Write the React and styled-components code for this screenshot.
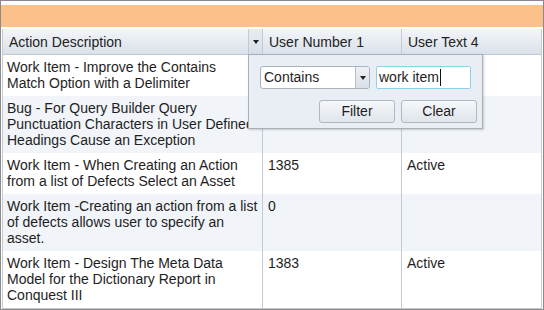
import React from "react";
import styled, { createGlobalStyle } from "styled-components";

const Global = createGlobalStyle`
  html, body { margin: 0; padding: 0; background: #fff; }
  body { font-family: "Liberation Sans", Arial, sans-serif; font-size: 14px; }
  * { box-sizing: border-box; }
`;

const Frame = styled.div`
  width: 544px;
  height: 310px;
  border: 1px solid #8a8a8a;
  padding-top: 4px;
  background: #fff;
  display: flex;
  flex-direction: column;
`;

const Toolbar = styled.div`
  height: 22px;
  background: #fcc08b;
  flex: none;
`;

const Grid = styled.div`
  position: relative;
  margin: 2px 1px 0;
  border: 1px solid #c3cad3;
  border-top: none;
  flex: 1;
  display: flex;
  flex-direction: column;
  overflow: hidden;
`;

const cols = "260px 139px 139px";

const HeaderRow = styled.div`
  display: grid;
  grid-template-columns: ${cols};
  height: 26px;
  border-bottom: 1px solid #c3cad3;
  background: linear-gradient(#f3f6f9, #dae1ea);
`;

const HeaderCell = styled.div`
  display: flex;
  align-items: center;
  padding-left: 6px;
  color: #222;
  font-size: 14px;
  line-height: 16px;
  border-right: ${(p) => (p.$last ? "none" : "1px solid #c3cad3")};
  white-space: nowrap;
`;

const HeaderTitle = styled.span`
  flex: 1;
`;

const MenuButton = styled.span`
  width: 14px;
  align-self: stretch;
  border-left: 1px solid #c3cad3;
  display: flex;
  align-items: center;
  justify-content: center;
  background: linear-gradient(#e9edf2, #d6dee7);
`;

const Caret = styled.span`
  width: 0;
  height: 0;
  border-left: 3.5px solid transparent;
  border-right: 3.5px solid transparent;
  border-top: 4px solid #222;
`;

const Row = styled.div`
  display: grid;
  grid-template-columns: ${cols};
  background: ${(p) => (p.$alt ? "#f1f4f8" : "#fff")};
`;

const Cell = styled.div`
  padding: 4px 3px 5px ${(p) => (p.$first ? "4px" : "5px")};
  line-height: 16px;
  color: #1e1e1e;
  border-right: ${(p) => (p.$last ? "none" : "1px solid #c3cad3")};
  overflow: hidden;
`;

const Line = styled.span`
  display: block;
  white-space: nowrap;
`;

const Popup = styled.div`
  position: absolute;
  left: 245px;
  top: 25px;
  width: 235px;
  height: 75px;
  border: 1px solid #a8b0ba;
  background: #e9eef4;
  box-shadow: 1px 1px 2px rgba(0, 0, 0, 0.18);
  padding: 11px 5px 5px 11px;
  display: flex;
  flex-direction: column;
`;

const FieldRow = styled.div`
  display: flex;
  gap: 6px;
`;

const Select = styled.div`
  width: 110px;
  height: 23px;
  border: 1px solid #a9b3bf;
  border-radius: 3px;
  background: #fff;
  display: flex;
  overflow: hidden;
`;

const SelectText = styled.span`
  flex: 1;
  padding-left: 3px;
  line-height: 21px;
  color: #1e1e1e;
`;

const SelectArrow = styled.span`
  width: 14px;
  border-left: 1px solid #b7c0ca;
  background: linear-gradient(#eef1f5, #d9e0e8);
  display: flex;
  align-items: center;
  justify-content: center;
`;

const Input = styled.div`
  width: 95px;
  height: 23px;
  border: 1px solid #8dd2ea;
  border-radius: 2px;
  background: #fff;
  padding-left: 2px;
  line-height: 21px;
  color: #1e1e1e;
  display: flex;
  align-items: center;
  white-space: nowrap;
`;

const TextCaret = styled.span`
  display: inline-block;
  width: 1px;
  height: 17px;
  background: #111;
  margin-left: 1px;
`;

const ButtonRow = styled.div`
  display: flex;
  justify-content: flex-end;
  gap: 6px;
  margin-top: 11px;
`;

const Button = styled.div`
  width: 76px;
  height: 23px;
  border: 1px solid #aeb7c2;
  border-radius: 3px;
  background: linear-gradient(#f6f8fa, #dfe5ec);
  text-align: center;
  line-height: 21px;
  color: #1e1e1e;
`;

const rows = [
  { d: ["Work Item - Improve the Contains", "Match Option with a Delimiter"], n: "", t: "" },
  { d: ["Bug - For Query Builder Query", "Punctuation Characters in User Defined", "Headings Cause an Exception"], n: "", t: "" },
  { d: ["Work Item - When Creating an Action", "from a list of Defects Select an Asset"], n: "1385", t: "Active" },
  { d: ["Work Item -Creating an action from a list", "of defects allows user to specify an", "asset."], n: "0", t: "" },
  { d: ["Work Item - Design The Meta Data", "Model for the Dictionary Report in", "Conquest III"], n: "1383", t: "Active" },
];

export default function App() {
  return (
    <>
      <Global />
      <Frame>
        <Toolbar />
        <Grid>
          <HeaderRow>
            <HeaderCell style={{ paddingRight: 0 }}>
              <HeaderTitle>Action Description</HeaderTitle>
              <MenuButton>
                <Caret />
              </MenuButton>
            </HeaderCell>
            <HeaderCell>User Number 1</HeaderCell>
            <HeaderCell $last>User Text 4</HeaderCell>
          </HeaderRow>
          {rows.map((r, i) => (
            <Row key={i} $alt={i % 2 === 1}>
              <Cell $first>
                {r.d.map((l, j) => (
                  <Line key={j}>{l}</Line>
                ))}
              </Cell>
              <Cell>{r.n}</Cell>
              <Cell $last>{r.t}</Cell>
            </Row>
          ))}
          <Popup>
            <FieldRow>
              <Select>
                <SelectText>Contains</SelectText>
                <SelectArrow>
                  <Caret />
                </SelectArrow>
              </Select>
              <Input>
                work item<TextCaret />
              </Input>
            </FieldRow>
            <ButtonRow>
              <Button>Filter</Button>
              <Button>Clear</Button>
            </ButtonRow>
          </Popup>
        </Grid>
      </Frame>
    </>
  );
}
